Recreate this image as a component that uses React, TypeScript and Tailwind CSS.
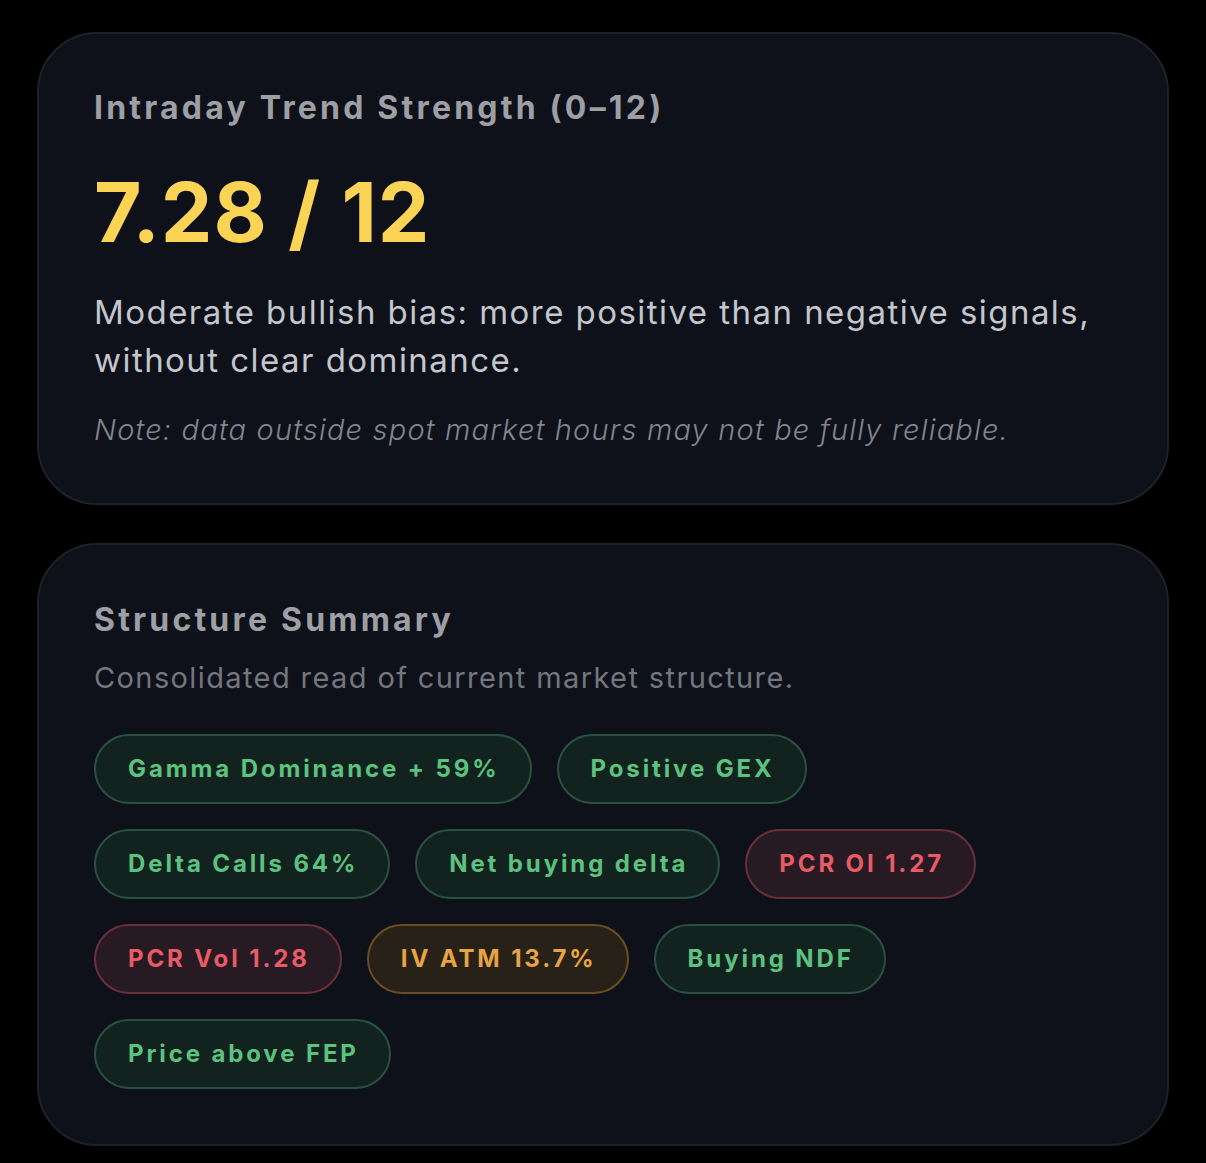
type Tone = "green" | "red" | "amber";

const chips: { label: string; tone: Tone }[] = [
  { label: "Gamma Dominance + 59%", tone: "green" },
  { label: "Positive GEX", tone: "green" },
  { label: "Delta Calls 64%", tone: "green" },
  { label: "Net buying delta", tone: "green" },
  { label: "PCR OI 1.27", tone: "red" },
  { label: "PCR Vol 1.28", tone: "red" },
  { label: "IV ATM 13.7%", tone: "amber" },
  { label: "Buying NDF", tone: "green" },
  { label: "Price above FEP", tone: "green" },
];

const toneClass: Record<Tone, string> = {
  green: "bg-[#12231f] border-[#28523f] text-[#5cc27f]",
  red: "bg-[#281a23] border-[#6b2f3b] text-[#e95b66]",
  amber: "bg-[#282117] border-[#6b4d22] text-[#e8a444]",
};

function Chip({ label, tone }: { label: string; tone: Tone }) {
  return (
    <span
      className={`inline-flex h-[70px] items-center rounded-full border-2 pl-[32px] pr-[30px] text-[24px] font-bold tracking-[0.12em] ${toneClass[tone]}`}
    >
      {label}
    </span>
  );
}

export default function App() {
  return (
    <div
      className="min-h-screen bg-black px-[37px] pt-[32px] pb-[20px] flex flex-col gap-[38px]"
      style={{ fontFamily: "Inter, 'Noto Sans', sans-serif" }}
    >
      {/* ── Trend strength ───────────────────────────────────────────── */}
      <section className="rounded-[60px] border-2 border-[#1e2129] bg-[#0e111a] px-[55px] pt-[54px] pb-[53px]">
        <h2 className="text-[32px] leading-[40px] font-bold tracking-[0.1em] text-[#9d9fa5]">
          Intraday Trend Strength (0–12)
        </h2>
        <div className="mt-[44px] text-[82px] leading-[82px] font-bold tracking-[0.012em] text-[#fcd455]">
          7.28 / 12
        </div>
        <p className="mt-[34px] text-[33px] leading-[48px] tracking-[0.044em] text-[#c4c6cd]">
          Moderate bullish bias: more positive than negative signals, without
          clear dominance.
        </p>
        <p className="mt-[26px] text-[29px] leading-[40px] italic font-light tracking-[0.041em] text-[#82858f]">
          Note: data outside spot market hours may not be fully reliable.
        </p>
      </section>

      {/* ── Structure summary ────────────────────────────────────────── */}
      <section className="rounded-[60px] border-2 border-[#1e2129] bg-[#0e111a] px-[55px] pt-[55px] pb-[55px]">
        <h2 className="text-[32px] leading-[40px] font-bold tracking-[0.1em] text-[#9d9fa5]">
          Structure Summary
        </h2>
        <p className="mt-[18px] text-[29px] leading-[40px] tracking-[0.048em] text-[#74767e]">
          Consolidated read of current market structure.
        </p>
        <div className="mt-[36px] flex flex-wrap gap-[25px]">
          {chips.map((c) => (
            <Chip key={c.label} label={c.label} tone={c.tone} />
          ))}
        </div>
      </section>
    </div>
  );
}
